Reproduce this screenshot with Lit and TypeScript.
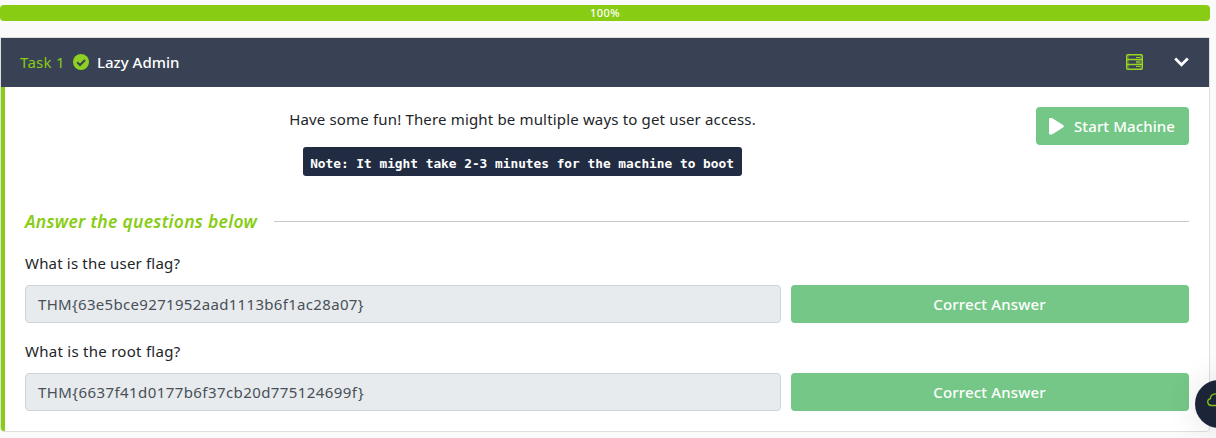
import { LitElement, html, css } from "lit";
import { customElement, property } from "lit/decorators.js";

@customElement("question-row")
export class QuestionRow extends LitElement {
  @property() question = "";
  @property() answer = "";

  static styles = css`
    :host { display: block; height: 88px; }
    .label { height: 26px; line-height: 26px; font-size: 15px; letter-spacing: var(--label-tracking, 0.18px); color: #212529; margin-bottom: 9px; }
    .fields { display: grid; grid-template-columns: 756px 398px; gap: 10px; height: 38px; }
    .field { box-sizing: border-box; height: 38px; padding: 0 12px; border: 1px solid #ced4da; border-radius: 4px; background: #e7ebee; color: #495057; font: inherit; font-size: 15px; line-height: 36px; letter-spacing: var(--answer-tracking, 0.32px); outline: none; min-width: 0; }
    .btn { border: 0; border-radius: 4px; background: #75c787; color: #fff; font: inherit; font-size: 15px; font-weight: 500; letter-spacing: 0.15px; padding: 0 1px 0 0; }
  `;

  render() {
    return html`
      <div class="label">${this.question}</div>
      <div class="fields">
        <input class="field" readonly .value=${this.answer} />
        <button class="btn">Correct Answer</button>
      </div>
    `;
  }
}

@customElement("app-root")
export class AppRoot extends LitElement {
  static styles = css`
    :host { display: block; position: relative; box-sizing: border-box; height: 438px; padding-top: 5px; overflow: hidden; background: #fafafa; font-family: "Noto Sans", "Open Sans", sans-serif; font-size: 15px; color: #212529; }
    svg { display: block; flex: none; }
    .progress { width: 1210px; height: 16px; border-radius: 4px; background: #88cc14; color: #fff; font-size: 11px; font-weight: 500; letter-spacing: 0.4px; line-height: 16px; text-align: center; }
    .card { box-sizing: border-box; width: 1210px; height: 395px; margin-top: 16px; border: 1px solid #dfdfdf; border-radius: 0 0 4px 4px; overflow: hidden; background: #fff; }
    .header { box-sizing: border-box; display: flex; align-items: center; height: 49px; padding: 0 20px 2px 19px; background: #384254; color: #fff; }
    .task { color: #88cc14; width: 53px; letter-spacing: 0.25px; white-space: nowrap; }
    .title { margin-left: 8px; font-weight: 500; }
    .tools { display: flex; align-items: center; gap: 31px; margin-left: auto; }
    .body { box-sizing: border-box; height: 344px; border-left: 4px solid #88cc14; padding: 20px 20px 0; }
    .intro { display: grid; grid-template-columns: 995px 153px; gap: 16px; height: 103px; align-items: start; }
    .copy { display: flex; flex-direction: column; align-items: center; }
    .lead { height: 24px; line-height: 24px; letter-spacing: 0.165px; white-space: nowrap; }
    .note { box-sizing: border-box; width: 439px; height: 29px; margin-top: 16px; padding-right: 1px; border-radius: 3px; background: #212c42; color: #fff; font: bold 12.8px/33px "DejaVu Sans Mono", monospace; text-align: center; white-space: nowrap; }
    .start { display: flex; align-items: center; gap: 10px; height: 38px; padding: 0 0 0 13px; border: 0; border-radius: 4px; background: #75c787; color: #fff; font: inherit; font-weight: 500; letter-spacing: 0.1px; white-space: nowrap; }
    .divider { display: flex; align-items: center; height: 23px; gap: 17px; margin-bottom: 17px; }
    .heading { width: 232px; margin: 0; font-size: 17.5px; line-height: 23px; letter-spacing: 0.27px; font-style: italic; font-weight: 600; color: #88cc14; white-space: nowrap; }
    .rule { flex: 1; height: 1px; background: #c9c9c9; }
    .root-flag { --label-tracking: 0.27px; --answer-tracking: 0.42px; }
    .cloud { position: absolute; left: 1195px; top: 380px; width: 48px; height: 48px; border-radius: 50%; background: #1c2538; box-shadow: 0 0 32px rgba(0, 0, 0, 0.12); display: flex; align-items: center; }
    .cloud svg { margin: 0 0 8px 12px; }
  `;

  render() {
    return html`
      <div class="progress">100%</div>
      <section class="card">
        <header class="header">
          <span class="task">Task 1</span>
          <svg width="16" height="16" viewBox="0 0 16 16">
            <circle cx="8" cy="8" r="8" fill="#8fd122" />
            <path d="M4.2 8.3 7 11 12 6" fill="none" stroke="#384254" stroke-width="2.1" />
          </svg>
          <span class="title">Lazy Admin</span>
          <div class="tools">
            <svg width="17" height="16" viewBox="0 0 17 16" fill="none" stroke="#99d721">
              <rect x=".75" y=".75" width="15.5" height="14.5" rx="1" stroke-width="1.5" />
              <path d="M1 5.5h15M1 10.5h15" stroke-width="1.3" />
              <path d="M2.7 1v14M14.4 1v14" stroke-width=".6" opacity=".65" />
              <path d="M10 3.5h4M10 12.5h4" stroke-width="1" />
              <rect x="10" y="6.5" width="4" height="3" fill="#7fa63b" stroke="none" />
            </svg>
            <svg width="15" height="10" viewBox="0 0 15 10" fill="none" stroke="#fff" stroke-width="2.7">
              <path d="M1.2 1.5 7.5 7.8l6.3-6.3" />
            </svg>
          </div>
        </header>
        <div class="body">
          <div class="intro">
            <div class="copy">
              <div class="lead">Have some fun! There might be multiple ways to get user access.</div>
              <div class="note">Note: It might take 2-3 minutes for the machine to boot</div>
            </div>
            <button class="start">
              <svg width="15" height="17" viewBox="0 0 15 17" fill="#fff">
                <path d="M0 1.2Q0 0 1.2 0H3L14 6.9Q15.8 8.2 14 9.6L3 16.4H1.2Q0 16.4 0 15.2Z" />
              </svg>
              <span>Start Machine</span>
            </button>
          </div>
          <div class="divider">
            <h2 class="heading">Answer the questions below</h2>
            <div class="rule"></div>
          </div>
          <question-row question="What is the user flag?" answer="THM{63e5bce9271952aad1113b6f1ac28a07}"></question-row>
          <question-row class="root-flag" question="What is the root flag?" answer="THM{6637f41d0177b6f37cb20d775124699f}"></question-row>
        </div>
      </section>
      <div class="cloud">
        <svg width="20" height="15" viewBox="0 0 20 15" fill="none" stroke="#82bf17" stroke-width="1.3">
          <path d="M5 12.5H4.3A3.5 3.5 0 0 1 3.4 5.6 4.8 4.8 0 0 1 12.2 3.1 3.4 3.4 0 0 1 16 6.5 3 3 0 0 1 16 12.5Z" />
        </svg>
      </div>
    `;
  }
}
